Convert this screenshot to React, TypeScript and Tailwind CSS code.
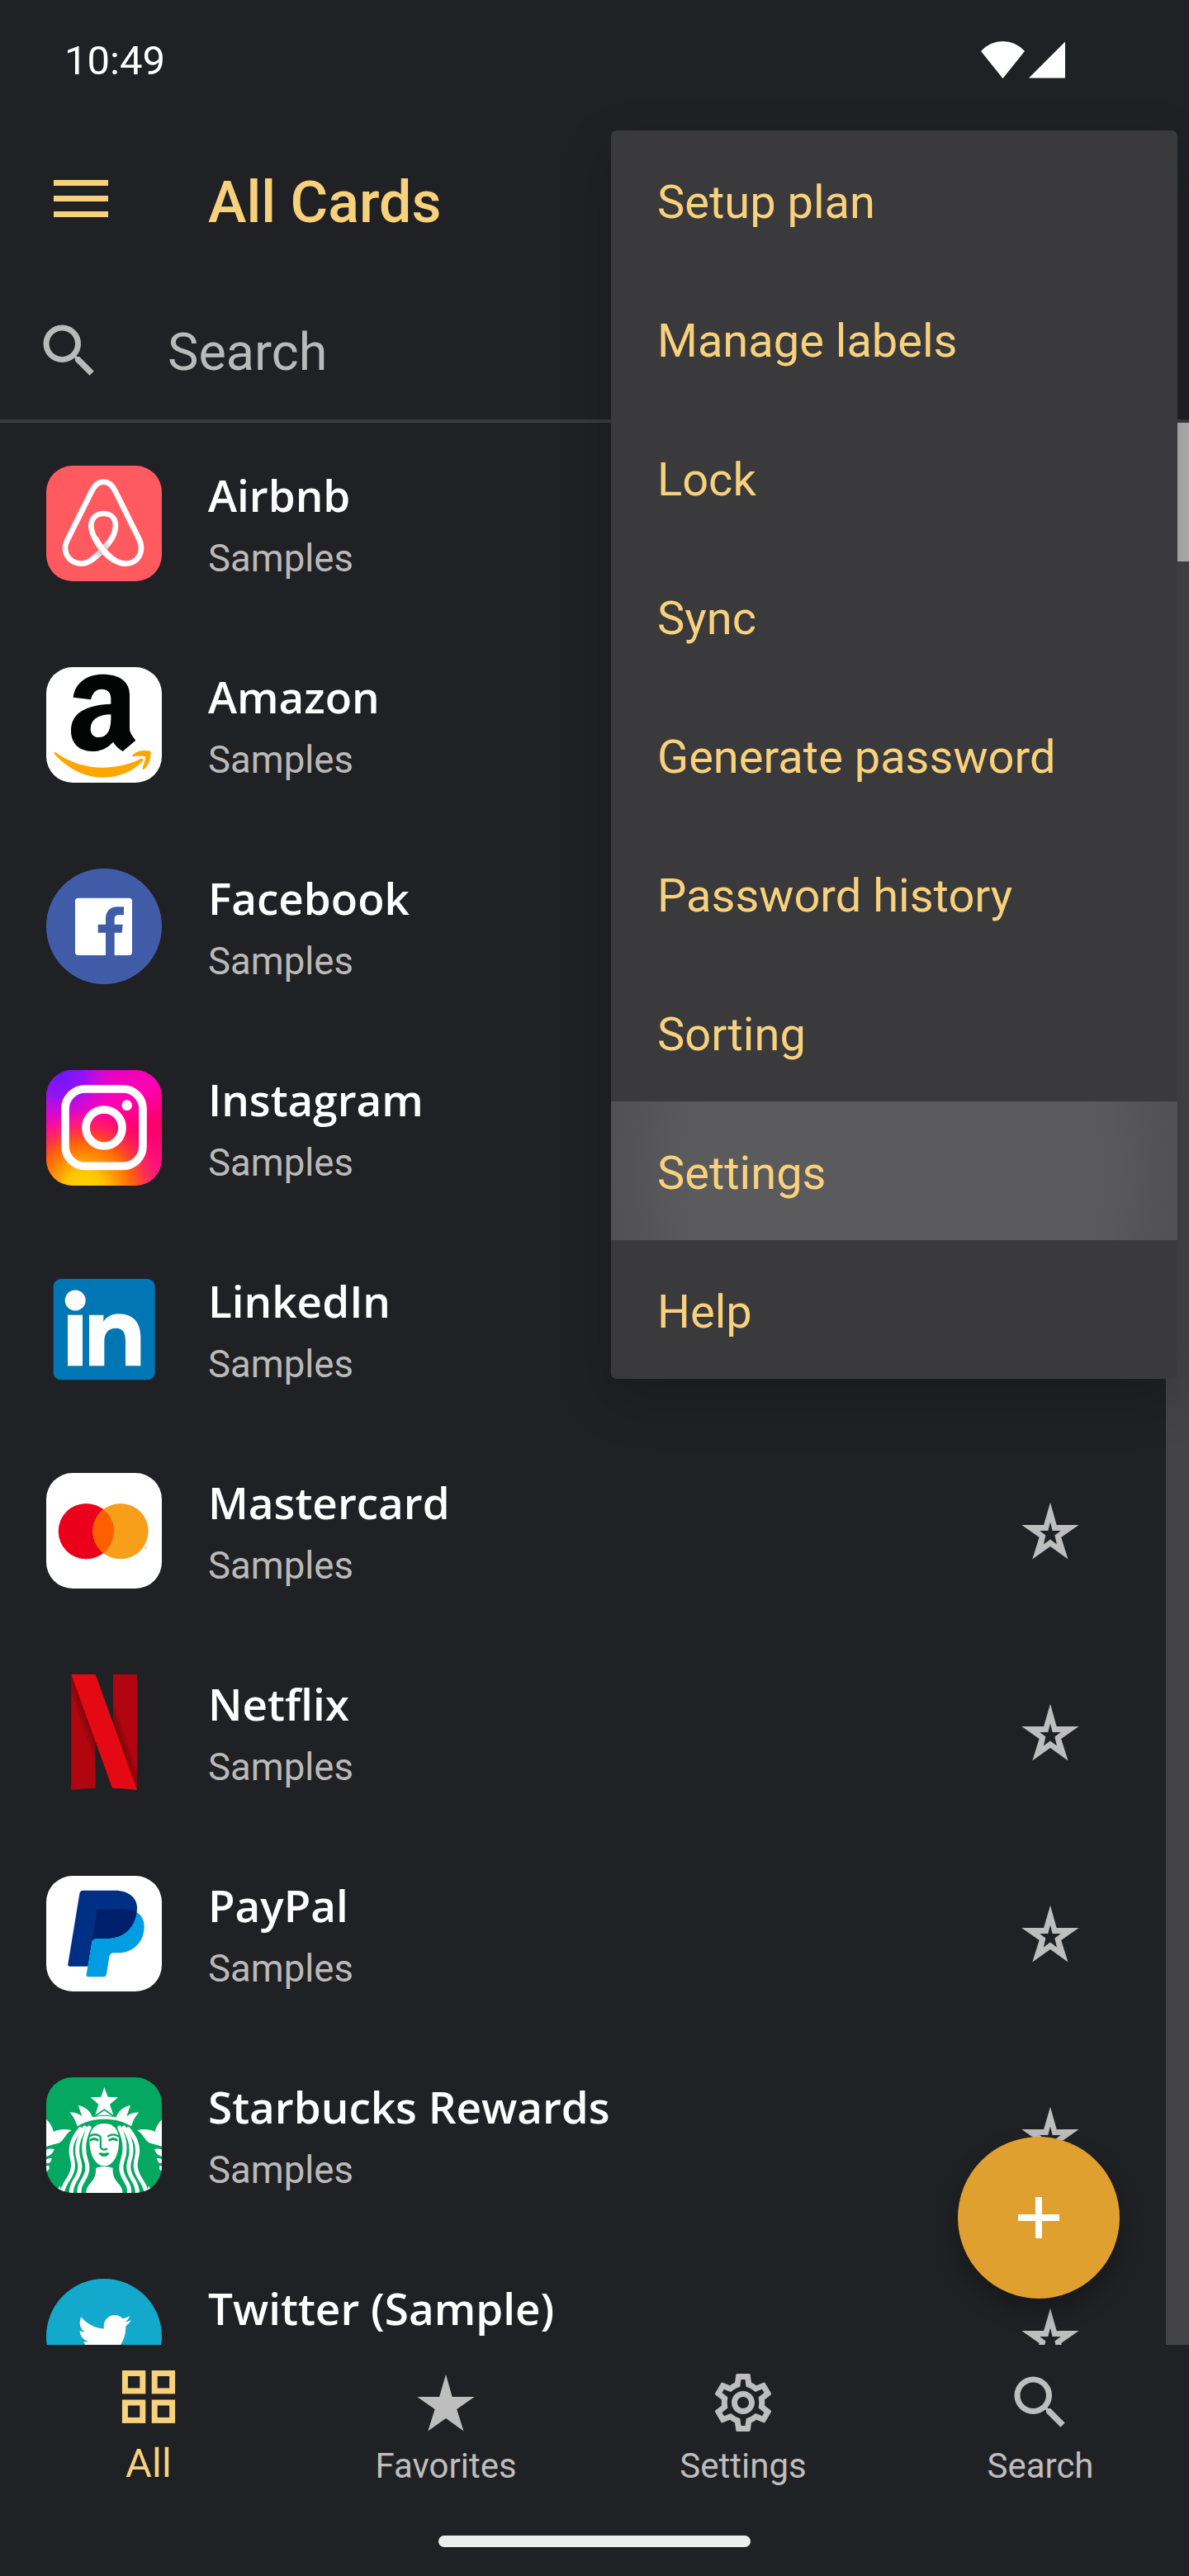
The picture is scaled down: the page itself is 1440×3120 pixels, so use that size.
import type { ReactNode } from "react";
import { MdOutlineSettings, MdSearch } from "react-icons/md";
import { FaTwitter } from "react-icons/fa";

const STAR_OUTER =
  "M42 7.7 49.7 35H76.6L55.2 50l8.3 26.5L42 61 20.3 76.5 28.6 50 7.3 35h26.8Z";
const STAR_INNER =
  "M42 31.4 39.3 42H29.2l7.2 5.5-2.5 11.1 8.1-6.2 7.9 6.2-2.5-11.1 7.3-5.5H44.6Z";

function StarIcon({ filled = false }: { filled?: boolean }) {
  return (
    <svg width="84" height="84" viewBox="0 0 84 84" fill="currentColor">
      <path fillRule="evenodd" d={filled ? STAR_OUTER : STAR_OUTER + STAR_INNER} />
    </svg>
  );
}

function GridIcon() {
  return (
    <svg width="84" height="84" viewBox="0 0 84 84" fill="none" stroke="currentColor" strokeWidth="7">
      <rect x="13.4" y="13.5" width="21.4" height="21.4" />
      <rect x="49.2" y="13.5" width="21.4" height="21.4" />
      <rect x="13.4" y="49" width="21.4" height="21.4" />
      <rect x="49.2" y="49" width="21.4" height="21.4" />
    </svg>
  );
}

// Logos share a 420 unit canvas, drawn at 140px
function Logo({ children, className = "" }: { children: ReactNode; className?: string }) {
  return (
    <svg width="140" height="140" viewBox="0 0 420 420" className={className}>
      {children}
    </svg>
  );
}

function AirbnbLogo() {
  return (
    <Logo className="rounded-[32px] bg-[#ff5a60]">
      <defs>
        <linearGradient id="airbnbFold" gradientUnits="userSpaceOnUse" x1="228" y1="272" x2="174" y2="334">
          <stop offset="0" stopColor="#fff" />
          <stop offset="0.4" stopColor="#c4c4c4" />
          <stop offset="0.6" stopColor="#c4c4c4" />
          <stop offset="1" stopColor="#fff" />
        </linearGradient>
      </defs>
      <g fill="none" stroke="#fff" strokeWidth="20">
        <path d="M208 303C180 335 155 356 128 356 92 356 69 329 69 300c0-13 4-23 11-36L165 93c11-22 23-34 43-34s32 12 43 34l85 171c7 13 9 23 9 36 0 29-21 56-57 56-63 0-125-94-125-138 0-28 19-44 45-44s44 16 44 44c0 27-20 60-44 85" />
        <path d="M228 278Q208 306 174 334" stroke="url(#airbnbFold)" />
        <path d="M178 262C200 303 245 356 288 356" />
      </g>
    </Logo>
  );
}

function AmazonLogo() {
  return (
    <Logo className="rounded-[32px] bg-white">
      <path
        fill="#030504"
        fillRule="evenodd"
        d="M98 110C104 56 150 26 206 26c58 0 97 26 97 74v122c0 16 9 28 22 44l-47 40c-16-10-26-20-35-34-22 24-46 34-77 34-48 0-76-31-76-74 0-67 55-94 145-98v-19c0-23-13-35-33-35-22 0-34 14-40 38ZM235 172c-48 0-74 20-74 52 0 20 12 31 30 31 34 0 46-30 44-83Z"
      />
      <path
        fill="#ffa700"
        d="M33 309C90 350 150 365 205 365s102-14 138-32c8-3 12 3 7 9-36 39-88 59-145 59C140 401 80 370 32 318c-5-6-3-11 1-9ZM313 320c18-18 46-20 67-14 1 26-7 50-24 65-6 2-8-2-6-6 5-13 11-29 10-40-12-4-29-2-42 0-6 0-7-3-5-5Z"
      />
    </Logo>
  );
}

function FacebookLogo() {
  return (
    <Logo className="rounded-full bg-[#405ca8]">
      <rect x="105" y="107" width="207" height="208" rx="11" fill="#fff" />
      <path
        fill="#405ca8"
        d="M216 316V233h-28v-30h28v-20c0-28 16-44 42-44h24v30h-18c-12 0-16 5-16 16v18h30l-3 30h-27v83Z"
      />
    </Logo>
  );
}

function InstagramLogo() {
  return (
    <Logo className="rounded-[32px]">
      <defs>
        <linearGradient id="igBase" x1="0.3" y1="0" x2="0.7" y2="1">
          <stop offset="0" stopColor="#e000c8" />
          <stop offset="0.35" stopColor="#ff00b0" />
          <stop offset="0.62" stopColor="#ff0068" />
          <stop offset="1" stopColor="#f8108c" />
        </linearGradient>
        <radialGradient id="igPurple" gradientUnits="userSpaceOnUse" cx="50" cy="10" r="215">
          <stop offset="0" stopColor="#6a18ff" />
          <stop offset="0.4" stopColor="#8a14fa" stopOpacity="0.9" />
          <stop offset="1" stopColor="#e010e0" stopOpacity="0" />
        </radialGradient>
        <radialGradient id="igYellow" gradientUnits="userSpaceOnUse" cx="140" cy="440" r="300">
          <stop offset="0" stopColor="#ffda00" />
          <stop offset="0.25" stopColor="#ffc400" />
          <stop offset="0.6" stopColor="#ff6a00" stopOpacity="0.9" />
          <stop offset="1" stopColor="#ff2060" stopOpacity="0" />
        </radialGradient>
      </defs>
      <rect width="420" height="420" fill="url(#igBase)" />
      <rect width="420" height="420" fill="url(#igPurple)" />
      <rect width="420" height="420" fill="url(#igYellow)" />
      <rect x="69" y="69" width="282" height="280" rx="72" fill="none" stroke="#fff" strokeWidth="29" />
      <circle cx="210" cy="210" r="66" fill="none" stroke="#fff" strokeWidth="29" />
      <circle cx="293" cy="128" r="19" fill="#fff" />
    </Logo>
  );
}

function LinkedInLogo() {
  return (
    <Logo>
      <rect x="26" y="27" width="369" height="367" rx="27" fill="#0076b4" />
      <g fill="#fff">
        <circle cx="105.5" cy="105" r="37.5" />
        <rect x="78" y="158" width="54" height="185" />
        <path d="M156 158h52v25c8-15 28-29 55-29 55 0 80 34 80 86v103h-55v-91c0-27-8-46-34-46-32 0-43 20-43 49v88h-55Z" />
      </g>
    </Logo>
  );
}

function MastercardLogo() {
  return (
    <Logo className="rounded-[32px] bg-white">
      <circle cx="145" cy="212" r="101" fill="#eb001b" />
      <circle cx="270" cy="212" r="101" fill="#f79e1b" />
      <path fill="#ff5f00" d="M207.500 132.700a101 101 0 0 1 0 158.600a101 101 0 0 1 0-158.600Z" />
      <rect x="357" y="271" width="9" height="3" fill="#f79e1b" />
    </Logo>
  );
}

function NetflixLogo() {
  return (
    <Logo>
      <defs>
        <linearGradient id="nfLeft" gradientUnits="userSpaceOnUse" x1="146" y1="246" x2="180" y2="234">
          <stop offset="0" stopColor="#b1060f" />
          <stop offset="1" stopColor="#7a050b" />
        </linearGradient>
        <linearGradient id="nfRight" gradientUnits="userSpaceOnUse" x1="286" y1="201" x2="254" y2="212">
          <stop offset="0" stopColor="#b1060f" />
          <stop offset="1" stopColor="#7a050b" />
        </linearGradient>
      </defs>
      <path fill="url(#nfLeft)" d="M91 0h88v413q-45 1-88 7Z" />
      <path fill="url(#nfRight)" d="M243 0h87v420l-87-200Z" />
      <path fill="#e50914" d="M91 0h88l151 420q-45-6-90-7Z" />
    </Logo>
  );
}

function PayPalLogo() {
  return (
    <Logo className="rounded-[32px] bg-white">
      <path
        fill="#002f86"
        d="M134 53h116c50 0 80 27 80 62 0 75-50 113-110 113h-38c-9 0-14 4-16 14l-14 87H86c-5 0-8-3-7-9L121 65c1-8 6-12 13-12Z"
      />
      <path
        fill="#009de2"
        d="M329 133c20 12 27 30 27 52 0 55-41 95-94 95h-16c-10 0-15 5-17 14l-10 63c-1 7-6 10-13 10h-53c-6 0-8-4-7-9l20-118c1-8 7-12 16-12h38c60 0 101-38 109-95Z"
      />
      <path
        fill="#001f6b"
        d="M329 133c-20-10-39-12-59-12h-74c-8 0-12 3-13 10l-16 107c3-8 8-10 15-10h38c60 0 101-38 109-95Z"
      />
    </Logo>
  );
}

function SirenSide() {
  return (
    <>
      <g fill="none" stroke="#fff" strokeWidth="15" strokeLinecap="round">
        <path d="M124 188C95 222 85 256 93 288c8 32 6 52-13 82-15 22-22 36-22 56" />
        <path d="M140 183C115 222 106 262 118 298c11 32 1 54-14 78-12 20-14 34-13 50" />
        <path d="M156 183C136 222 132 266 145 303c11 32 0 54-14 77-12 18-13 32-9 46" />
      </g>
      <g fill="#fff">
        <path d="M0 152c13 12 23 28 27 46 20-12 44-10 65-6-22 12-28 38-44 46-15 6-34 8-48 14Z" />
        <path d="M0 264c10-6 22-5 29-3-4 14-14 24-29 27ZM0 298c7-3 14-4 20-4-1 9-5 15-10 18H0ZM0 322l10-1 1 12-11 12Z" />
        <path d="M50 394c-8 14-14 20-28 26h34Z" />
      </g>
    </>
  );
}

function StarbucksLogo() {
  return (
    <Logo className="rounded-[32px] bg-[#05a860]">
      <g fill="#fff">
        <path d="m211 36 13 35 37 2-30 25 13 39-33-23-33 23 12-39-29-25 38-2Z" />
        <path d="M183 140 211 121l28 19q-28-5-56 0Z" />
        <path d="M86 128c17-1 32 4 44 14l-14-41c26 6 43 20 52 44q43-10 86 0c9-24 26-38 52-44l-14 41c12-10 27-15 44-14-13 14-21 30-27 50-28-19-61-26-98-26s-69 7-98 26c-6-20-14-36-27-50Z" />
        <path d="M211 168c34 0 51 22 53 56 2 48-16 98-53 98s-55-50-54-98c2-34 20-56 54-56Z" />
        <path d="M180 329q31-10 62 0c-2 30 8 42 24 61 9 11 11 20 11 30H145c0-10 3-20 11-30 16-19 26-31 24-61Z" />
      </g>
      <SirenSide />
      <g transform="matrix(-1 0 0 1 422 0)">
        <SirenSide />
      </g>
      <g fill="none" stroke="#05a860" strokeWidth="7" strokeLinecap="round">
        <path d="M158 214c10-8 28-9 38 1 4 12 0 26 2 42" />
        <path d="M225 214c10-8 26-8 36 0" />
        <path d="M162 228q12-9 24 0M230 228q14-9 26 0" strokeWidth="9" />
        <path d="M202 260q9 5 18 0" />
      </g>
      <path fill="#05a860" d="M190 275q10-3 20 1 10-4 20-1-7 13-20 13t-20-13Z" />
    </Logo>
  );
}

function TwitterLogo() {
  return (
    <div className="flex h-[140px] w-[140px] items-center justify-center rounded-full bg-[#13a9cd]">
      <FaTwitter size={65} className="text-white" />
    </div>
  );
}

interface Card {
  name: string;
  label?: string;
  logo: ReactNode;
}

const cards: Card[] = [
  { name: "Airbnb", label: "Samples", logo: <AirbnbLogo /> },
  { name: "Amazon", label: "Samples", logo: <AmazonLogo /> },
  { name: "Facebook", label: "Samples", logo: <FacebookLogo /> },
  { name: "Instagram", label: "Samples", logo: <InstagramLogo /> },
  { name: "LinkedIn", label: "Samples", logo: <LinkedInLogo /> },
  { name: "Mastercard", label: "Samples", logo: <MastercardLogo /> },
  { name: "Netflix", label: "Samples", logo: <NetflixLogo /> },
  { name: "PayPal", label: "Samples", logo: <PayPalLogo /> },
  { name: "Starbucks Rewards", label: "Samples", logo: <StarbucksLogo /> },
  { name: "Twitter (Sample)", logo: <TwitterLogo /> },
];

const menuItems = [
  "Setup plan",
  "Manage labels",
  "Lock",
  "Sync",
  "Generate password",
  "Password history",
  "Sorting",
  "Settings",
  "Help",
];

const tabs = [
  { label: "Favorites", icon: <StarIcon filled /> },
  { label: "Settings", icon: <MdOutlineSettings size={84} /> },
  { label: "Search", icon: <MdSearch size={84} /> },
];

function StatusBar() {
  return (
    <div className="flex h-[140px] items-start justify-between pt-[44px] pr-[150px] pl-[78px] text-white">
      <span className="text-[49px] leading-[60px]">10:49</span>
      <svg width="104" height="46" viewBox="0 0 104 46" fill="currentColor" className="mt-[5px]">
        <path d="M28.500 46 2 13Q13 1 28.500 1T55 13Z" />
        <path d="M104 1.500V45.500H60Z" />
      </svg>
    </div>
  );
}

function CardRow({ name, label, logo }: Card) {
  return (
    <div className="flex h-[244px] shrink-0 items-center pr-[98px] pl-14">
      {logo}
      <div className="ml-14 flex h-full flex-1 flex-col gap-[13px] pt-[56px]">
        <h3 className="font-['Open_Sans',sans-serif] text-[53px] leading-[64px] font-semibold text-white">
          {name}
        </h3>
        {label && <p className="text-[45.5px] leading-[64px] text-[#bababa]">{label}</p>}
      </div>
      <div className="text-[#bebebe]">
        <StarIcon />
      </div>
    </div>
  );
}

function OverflowMenu() {
  return (
    <div className="absolute top-[158px] left-[740px] w-[686px] overflow-hidden rounded-[7px] bg-[#3a3a3c] text-[#f8d17c]">
      {menuItems.map((item) => (
        <div
          key={item}
          className={`flex h-[168px] items-center px-14 pt-[5px] text-[56px] leading-[66px] ${
            item === "Settings"
              ? "bg-[radial-gradient(circle_at_50%_50%,#5b5b5d_0,#5b5b5d_245px,#515153_345px)]"
              : ""
          }`}
        >
          {item}
        </div>
      ))}
    </div>
  );
}

export default function App() {
  return (
    <div className="relative flex h-[3120px] w-[1440px] flex-col overflow-hidden bg-[#202124] font-[Roboto,sans-serif]">
      <StatusBar />

      <header className="flex h-[210px] items-center pl-[65px] text-[#f8d17c]">
        <div className="-mt-[9px] flex w-[66px] flex-col gap-3">
          <span className="h-[7px] bg-current" />
          <span className="h-[7px] bg-current" />
          <span className="h-[7px] bg-current" />
        </div>
        <h1 className="ml-[121px] text-[70px] leading-[84px] font-medium">All Cards</h1>
      </header>

      <div className="flex h-[162px] items-center border-b-4 border-[#3a3b3e] pb-2 pl-[42px] text-[#bababa]">
        <MdSearch size={84} />
        <span className="ml-[77px] pt-[3px] text-[63px] leading-[76px]">Search</span>
      </div>

      <main className="flex h-[2328px] shrink-0 overflow-hidden">
        <div className="flex w-[1412px] flex-col">
          {cards.map((card) => (
            <CardRow key={card.name} {...card} />
          ))}
        </div>
        <div className="w-7 bg-[#444446]">
          <div className="h-[168px] bg-[#b3b3b3]" />
        </div>
      </main>

      <nav className="grid h-[280px] grid-cols-4 text-[#bebebe]">
        <div className="flex flex-col items-center gap-[10px] pt-[21px] text-[#f8d17c]">
          <GridIcon />
          <span className="text-[49px] leading-[58px]">All</span>
        </div>
        {tabs.map((tab) => (
          <div key={tab.label} className="flex flex-col items-center gap-[10px] pt-7">
            {tab.icon}
            <span className="text-[42px] leading-[50px]">{tab.label}</span>
          </div>
        ))}
      </nav>

      {/* gesture bar */}
      <div className="absolute bottom-[35px] left-[531px] h-[14px] w-[378px] rounded-full bg-[#eeeeee]" />

      <button className="absolute top-[2588px] left-[1160px] flex h-[196px] w-[196px] items-center justify-center rounded-full bg-[#e0a030] shadow-[0_14px_28px_rgba(0,0,0,0.28)]">
        <svg width="50" height="50" viewBox="0 0 50 50" stroke="#fff" strokeWidth="8">
          <path d="M25 0v50M0 25h50" />
        </svg>
      </button>

      {/* menu shadow sits under the panel so the panel can clip its rows */}
      <div className="absolute top-[158px] left-[740px] h-[1512px] w-[686px] rounded-[7px] shadow-[0_24px_64px_rgba(0,0,0,0.2)]" />
      <OverflowMenu />
    </div>
  );
}
